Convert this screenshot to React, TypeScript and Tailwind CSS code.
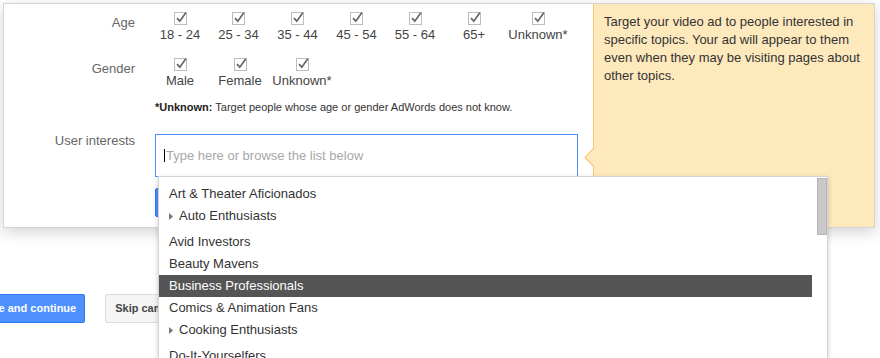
import React from 'react'

const ages = [
  { label: '18 - 24', w: 'w-[58px]' },
  { label: '25 - 34', w: 'w-[59px]' },
  { label: '35 - 44', w: 'w-[59px]' },
  { label: '45 - 54', w: 'w-[59px]' },
  { label: '55 - 64', w: 'w-[58px]' },
  { label: '65+', w: 'w-[60px]' },
  { label: 'Unknown*', w: 'w-[68px]' },
]

const genders = [
  { label: 'Male', w: 'w-[58px]' },
  { label: 'Female', w: 'w-[62px]' },
  { label: 'Unknown*', w: 'w-[62px]' },
]

const interests = [
  { name: 'Art & Theater Aficionados' },
  { name: 'Auto Enthusiasts', tree: true },
  { name: 'Avid Investors' },
  { name: 'Beauty Mavens' },
  { name: 'Business Professionals', active: true },
  { name: 'Comics & Animation Fans' },
  { name: 'Cooking Enthusiasts', tree: true },
  { name: 'Do-It-Yourselfers' },
]

function Check() {
  return (
    <svg width="13" height="13" viewBox="0 0 13 13" className="block overflow-visible">
      <rect x="0.5" y="0.5" width="12" height="12" fill="#fff" stroke="#bdbdbd" />
      <path d="M3 6.2 L5.8 9.2 L11.8 0.8" fill="none" stroke="#666" strokeWidth="1.7" />
    </svg>
  )
}

function Option({ label, w }: { label: string; w: string }) {
  return (
    <div className={`${w} flex flex-col items-center`}>
      <Check />
      <span className="mt-[2px] leading-[15px] text-[#444] whitespace-nowrap">{label}</span>
    </div>
  )
}

export default function App() {
  return (
    <div className="relative w-[880px] h-[358px] overflow-hidden bg-white font-['Liberation_Sans',Arial,sans-serif] text-[13px]">
      {/* Card + help panel */}
      <div className="ml-[3px] mt-[3px] flex w-[872px] h-[225px] shadow-[0_4px_14px_rgba(0,0,0,0.18)]">
        <div className="w-[590px] border border-r-0 border-[#d4d4d4] bg-white">
          {/* Age */}
          <div className="flex pt-[8px]">
            <div className="w-[131px] pt-[3px] text-right leading-[15px] text-[#666]">Age</div>
            <div className="ml-[16px] flex">
              {ages.map((a) => (
                <Option key={a.label} label={a.label} w={a.w} />
              ))}
            </div>
          </div>

          {/* Gender */}
          <div className="flex pt-[16px]">
            <div className="w-[131px] pt-[3px] text-right leading-[15px] text-[#666]">Gender</div>
            <div className="ml-[16px] flex">
              {genders.map((g) => (
                <Option key={g.label} label={g.label} w={g.w} />
              ))}
            </div>
          </div>

          <p className="ml-[151px] mt-[13px] text-[11px] leading-[13px] text-[#333]">
            <b className="text-[#222]">*Unknown:</b> Target people whose age or gender AdWords does not know.
          </p>

          {/* User interests */}
          <div className="flex mt-[20px]">
            <div className="w-[131px] -mt-[1px] text-right leading-[15px] text-[#666]">User interests</div>
            <div className="ml-[20px]">
              <div className="w-[423px] h-[43px] border border-[#4d90fe] flex items-center pl-[8px]">
                <span className="w-px h-[13px] bg-black mr-[1px]" />
                <span className="text-[#a8a8a8]">Type here or browse the list below</span>
              </div>
              <div className="mt-[11px] w-[100px] h-[29px] rounded-[2px] bg-[#4d90fe] border border-[#3079ed]" />
            </div>
          </div>
        </div>

        <div className="relative w-[282px] border border-[#d4d4d4] border-l-[#f8c77c] bg-[#fee9bd] px-[10px] pt-[9px] leading-[18px] text-[#333]">
          Target your video ad to people interested in specific topics. Your ad will appear to them even when they may be visiting pages about other topics.
          <svg width="11" height="19" viewBox="0 0 11 19" className="absolute left-[-10px] top-[144px]">
            <path d="M11 0 L1 9.5 L11 19 Z" fill="#fee9bd" />
            <path d="M10 0 L1 9.5 L10 19" fill="none" stroke="#f8c77c" strokeWidth="1.2" />
          </svg>
        </div>
      </div>

      {/* Footer buttons */}
      <div className="mt-[66px] -ml-[30px] flex gap-[20px]">
        <button className="h-[29px] px-[8px] rounded-[2px] bg-[#4d90fe] border border-[#3079ed] text-[11px] font-bold text-white whitespace-nowrap">
          Save and continue
        </button>
        <button className="h-[29px] px-[9px] rounded-[2px] bg-[#f5f5f5] border border-[#dcdcdc] text-[11px] font-bold text-[#444] whitespace-nowrap">
          Skip campaign creation
        </button>
      </div>

      {/* Interests dropdown */}
      <div className="absolute left-[158px] top-[176px] w-[670px] h-[200px] border border-[#d4d4d4] bg-white shadow-[0_2px_5px_rgba(0,0,0,0.2)] flex">
        <ul className="w-[653px] pt-[6px] text-[#333]">
          {interests.map((it) => (
            <li
              key={it.name}
              className={`h-[22px] leading-[22px] px-[10px] flex items-center whitespace-nowrap ${
                it.tree ? 'mb-[4px]' : ''
              } ${it.active ? 'bg-[#555] text-white' : ''}`}
            >
              {it.tree && (
                <svg width="4" height="7" viewBox="0 0 4 7" className="mr-[6px]">
                  <path d="M0 0 L4 3.5 L0 7 Z" fill="#777" />
                </svg>
              )}
              {it.name}
            </li>
          ))}
        </ul>
        <div className="ml-[5px] mt-[1px] w-[10px] h-[57px] bg-[#c9c9c9] border border-[#b5b5b5]" />
      </div>
    </div>
  )
}
